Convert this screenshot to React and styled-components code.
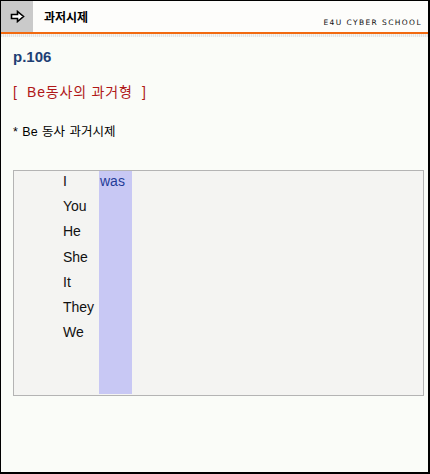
import React from 'react';
import styled, { createGlobalStyle } from 'styled-components';

const GlobalStyle = createGlobalStyle`
  html, body {
    margin: 0;
    padding: 0;
    background: #ffffff;
  }
  body {
    font-family: "Liberation Sans", "Noto Sans CJK KR", sans-serif;
  }
`;

const Frame = styled.div`
  box-sizing: border-box;
  width: 430px;
  height: 474px;
  background: #fafcf8;
  border-top: 1px solid #000;
  border-left: 1px solid #000;
  border-right: 2px solid #000;
  border-bottom: 2px solid #000;
  display: flex;
  flex-direction: column;
`;

const Header = styled.div`
  display: flex;
  align-items: stretch;
  height: 31px;
  background: #fdfdfb;
`;

const IconBox = styled.div`
  width: 32px;
  background: #cacaca;
  display: flex;
  align-items: center;
  justify-content: center;
`;

const Title = styled.div`
  display: flex;
  align-items: center;
  padding-left: 11px;
  font-size: 12px;
  font-weight: bold;
  color: #000;
  flex: 1;
`;

const School = styled.div`
  align-self: flex-end;
  padding: 0 6px 5px 0;
  font-family: "DejaVu Sans", sans-serif;
  font-size: 7.5px;
  letter-spacing: 1.4px;
  color: #111;
`;

const OrangeLine = styled.div`
  height: 2px;
  background: #f26a10;
`;

const DotStrip = styled.div`
  height: 3px;
  background: repeating-linear-gradient(90deg, #e4e4e2 0 1px, #f4f4f2 1px 2px);
`;

const Content = styled.div`
  padding: 11px 5px 0 12px;
`;

const PageNo = styled.div`
  font-size: 15px;
  font-weight: bold;
  color: #1e3f74;
  height: 20px;
`;

const Section = styled.div`
  margin-top: 13px;
  font-size: 14px;
  letter-spacing: 0.8px;
  color: #b01818;
  white-space: pre;
`;

const Note = styled.div`
  margin-top: 20px;
  font-size: 12.5px;
  color: #000;
  word-spacing: 1px;
`;

const Board = styled.div`
  box-sizing: border-box;
  margin-top: 30px;
  width: 411px;
  height: 226px;
  border: 1px solid #b4b4b4;
  background-color: #f4f4f2;
  background-image: radial-gradient(#ffffff 0.6px, transparent 0.7px);
  background-size: 4px 4px;
  display: grid;
  grid-template-columns: 85px 33px 1fr;
  padding-bottom: 1px;
`;

const Words = styled.div`
  padding: 2px 0 0 49px;
  grid-column: 1;
  display: flex;
  flex-direction: column;
`;

const Word = styled.div`
  height: 25.2px;
  font-size: 14px;
  color: ${p => (p.$verb ? '#1f3c98' : '#111')};
`;

const Highlight = styled.div`
  grid-column: 2;
  background-color: #c8c8f4;
  background-image: radial-gradient(#bcbcec 0.6px, transparent 0.7px);
  background-size: 4px 4px;
  padding: 2px 0 0 1px;
`;

const Arrow = () => (
  <svg width="15" height="13" viewBox="0 0 15 13">
    <path d="M1.5 4.5 H7.5 V1.5 L13.5 6.5 L7.5 11.5 V8.5 H1.5 Z" fill="#fff" stroke="#000" strokeWidth="1.6" strokeLinejoin="miter" />
  </svg>
);

const pronouns = ['I', 'You', 'He', 'She', 'It', 'They', 'We'];

export default function App() {
  return (
    <>
      <GlobalStyle />
      <Frame>
        <Header>
          <IconBox><Arrow /></IconBox>
          <Title>과저시제</Title>
          <School>E4U CYBER SCHOOL</School>
        </Header>
        <OrangeLine />
        <DotStrip />
        <Content>
          <PageNo>p.106</PageNo>
          <Section>{'[  Be동사의 과거형  ]'}</Section>
          <Note>* Be 동사 과거시제</Note>
          <Board>
            <Words>
              {pronouns.map(w => <Word key={w}>{w}</Word>)}
            </Words>
            <Highlight>
              <Word $verb>was</Word>
            </Highlight>
          </Board>
        </Content>
      </Frame>
    </>
  );
}
